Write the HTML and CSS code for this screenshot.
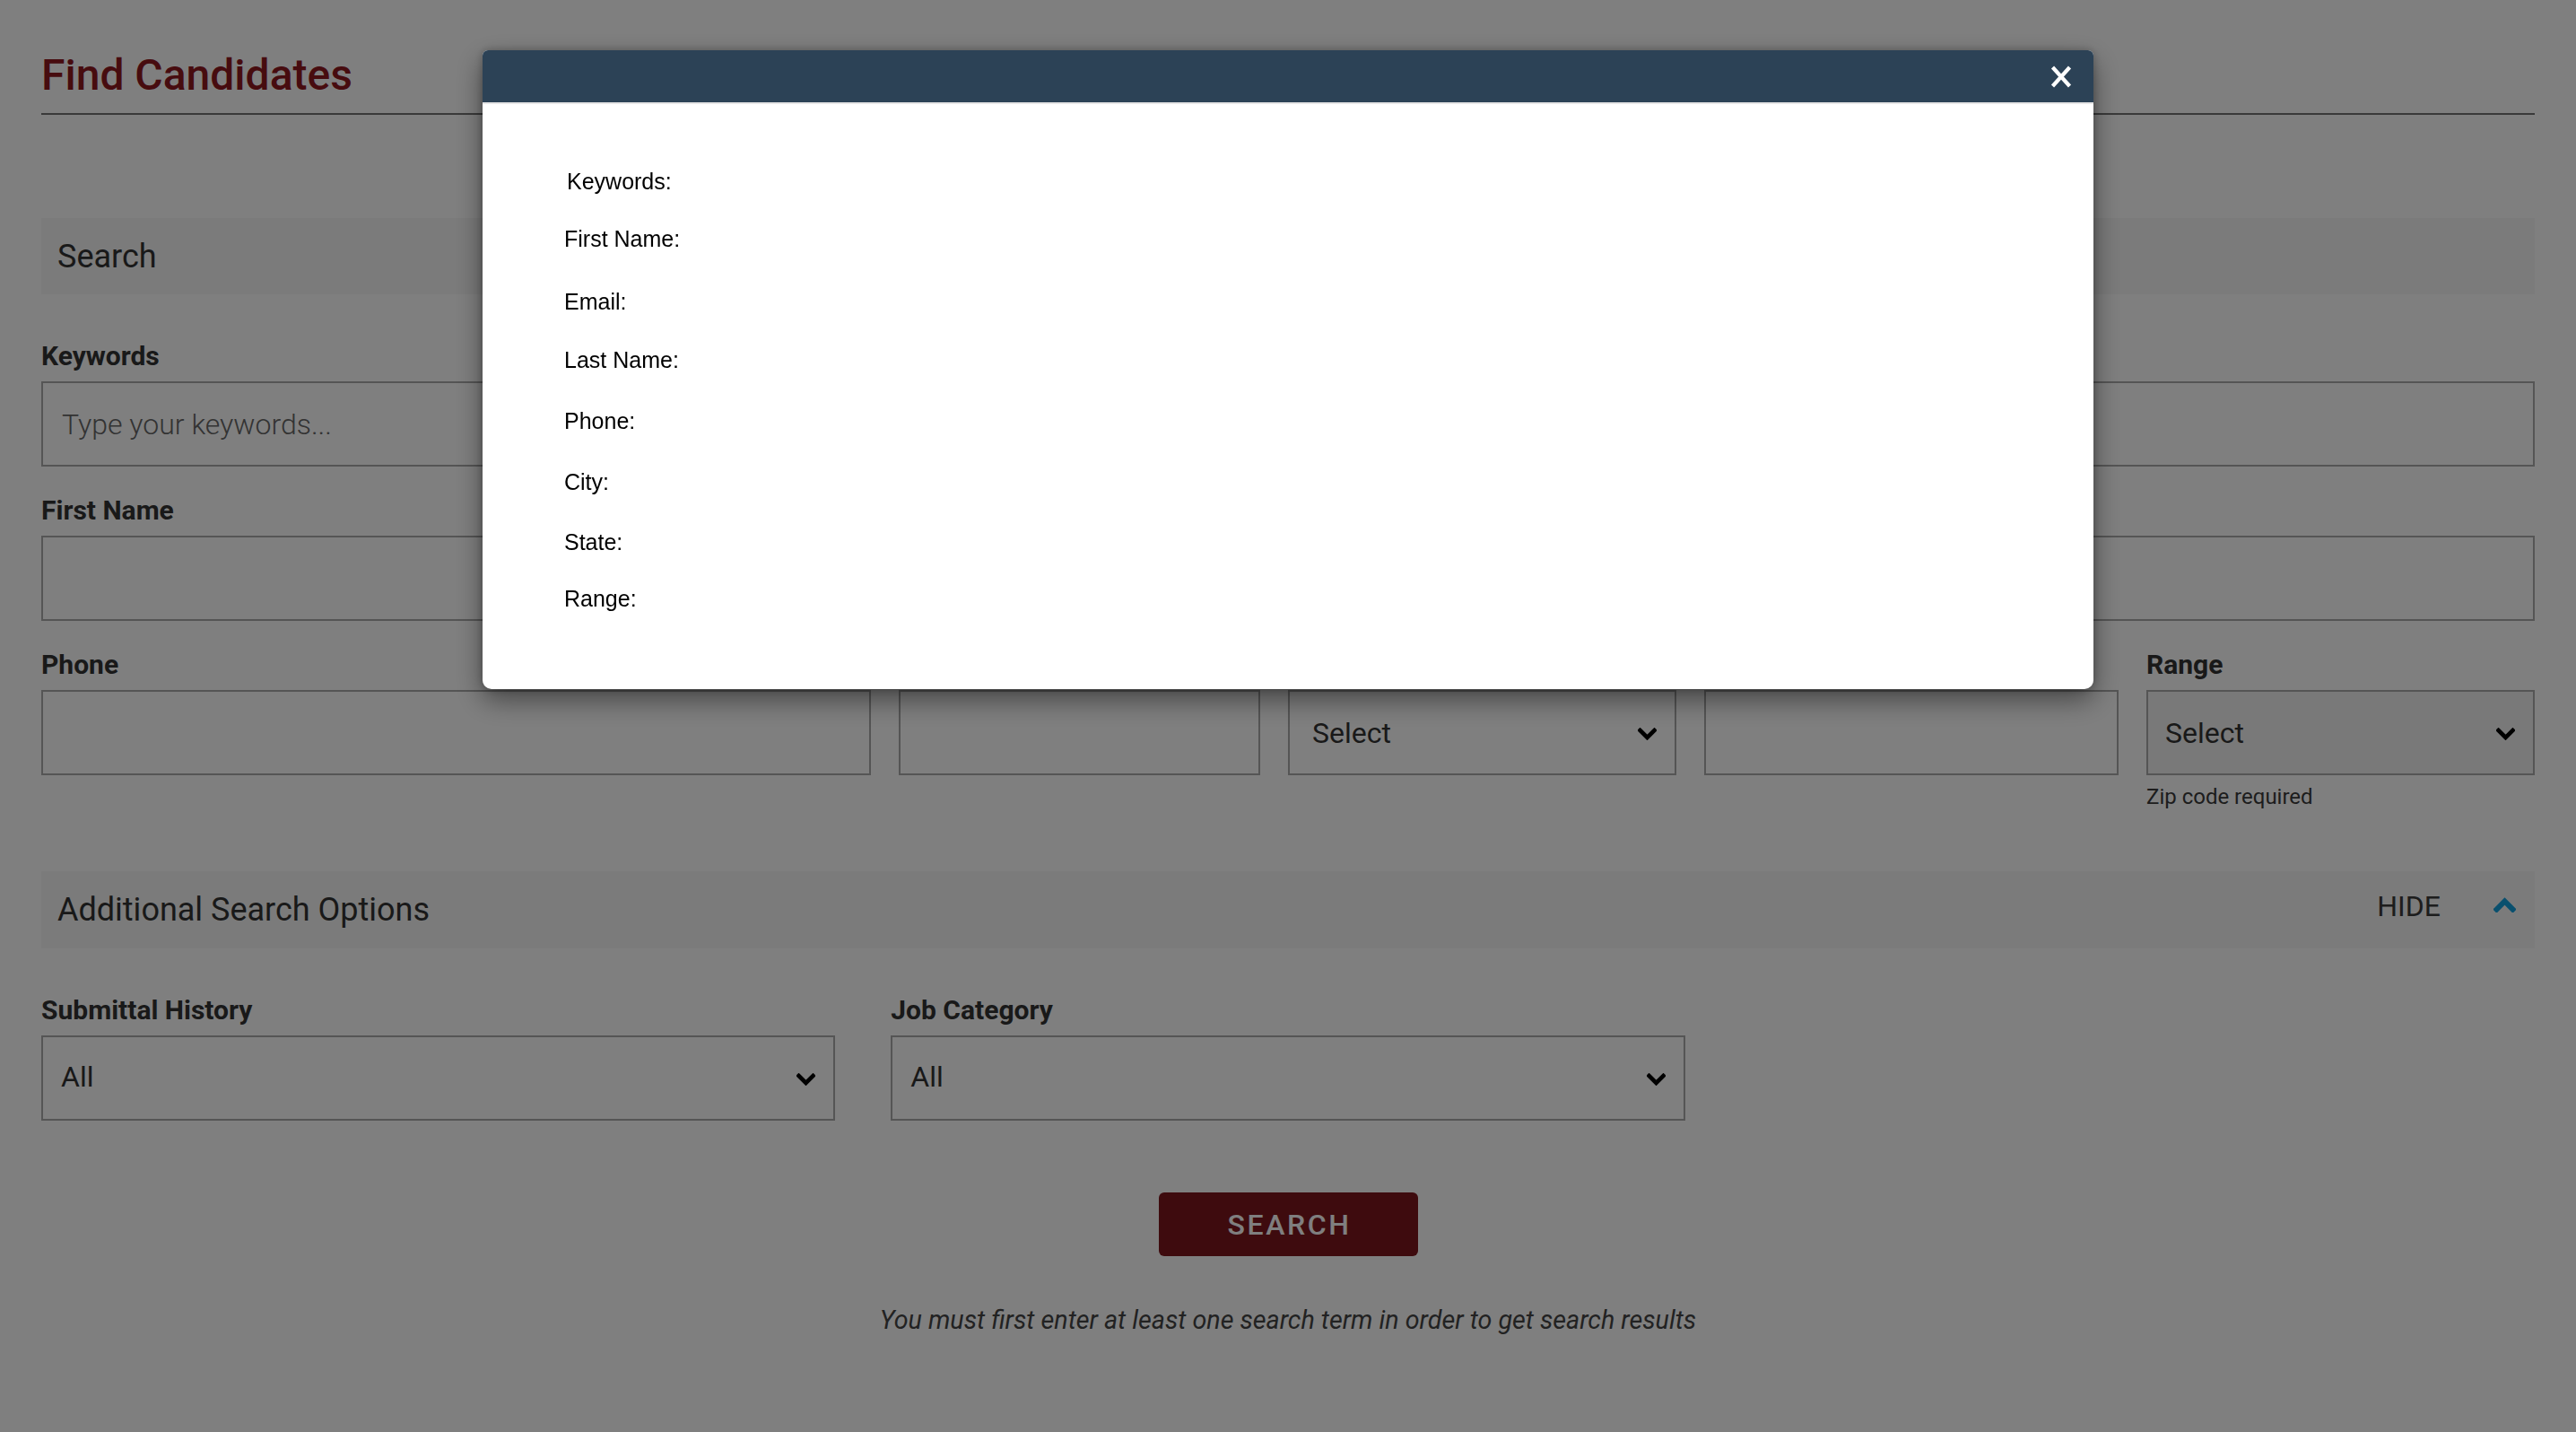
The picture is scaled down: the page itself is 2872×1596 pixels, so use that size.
FILE: index.html
```html
<!DOCTYPE html>
<html lang="en">
<head>
<meta charset="utf-8">
<title>Find Candidates</title>
<link rel="stylesheet" href="styles.css">
</head>
<body>
<main class="page">
  <h1 class="page-title">Find Candidates</h1>

  <section class="band">
    <h2 class="band-title">Search</h2>
  </section>

  <div class="field field-keywords">
    <label class="field-label" for="kw">Keywords</label>
    <input class="text-input" id="kw" type="text" placeholder="Type your keywords...">
  </div>

  <div class="row row-names">
    <div class="field">
      <label class="field-label" for="fn">First Name</label>
      <input class="text-input" id="fn" type="text">
    </div>
    <div class="field">
      <label class="field-label" for="ln">Last Name</label>
      <input class="text-input" id="ln" type="text">
    </div>
    <div class="field">
      <label class="field-label" for="em">Email</label>
      <input class="text-input" id="em" type="text">
    </div>
  </div>

  <div class="row row-location">
    <div class="field">
      <label class="field-label" for="ph">Phone</label>
      <input class="text-input" id="ph" type="text">
    </div>
    <div class="field">
      <label class="field-label" for="ci">City</label>
      <input class="text-input" id="ci" type="text">
    </div>
    <div class="field">
      <span class="field-label">State</span>
      <div class="select select-state">
        <span class="select-value">Select</span>
        <svg class="chev-down" viewBox="0 0 21 14" width="21" height="14"><path d="M2.5 3 L10.5 11 L18.5 3" fill="none" stroke="#000" stroke-width="4.6" stroke-linecap="square" stroke-linejoin="miter"/></svg>
      </div>
    </div>
    <div class="field">
      <label class="field-label" for="zp">Zip Code</label>
      <input class="text-input" id="zp" type="text">
    </div>
    <div class="field">
      <span class="field-label">Range</span>
      <div class="select select-muted">
        <span class="select-value">Select</span>
        <svg class="chev-down" viewBox="0 0 21 14" width="21" height="14"><path d="M2.5 3 L10.5 11 L18.5 3" fill="none" stroke="#000" stroke-width="4.6" stroke-linecap="square" stroke-linejoin="miter"/></svg>
      </div>
      <p class="help-text">Zip code required</p>
    </div>
  </div>

  <section class="band band-toggle">
    <h2 class="band-title">Additional Search Options</h2>
    <div class="toggle">
      <span class="toggle-text">HIDE</span>
      <svg class="chev-up" viewBox="0 0 25 17" width="25" height="17"><path d="M3.5 13.5 L12.5 4.5 L21.5 13.5" fill="none" stroke="#13a0dc" stroke-width="6" stroke-linecap="square" stroke-linejoin="miter"/></svg>
    </div>
  </section>

  <div class="row row-extra">
    <div class="field">
      <span class="field-label">Submittal History</span>
      <div class="select">
        <span class="select-value">All</span>
        <svg class="chev-down" viewBox="0 0 21 14" width="21" height="14"><path d="M2.5 3 L10.5 11 L18.5 3" fill="none" stroke="#000" stroke-width="4.6" stroke-linecap="square" stroke-linejoin="miter"/></svg>
      </div>
    </div>
    <div class="field">
      <span class="field-label">Job Category</span>
      <div class="select">
        <span class="select-value">All</span>
        <svg class="chev-down" viewBox="0 0 21 14" width="21" height="14"><path d="M2.5 3 L10.5 11 L18.5 3" fill="none" stroke="#000" stroke-width="4.6" stroke-linecap="square" stroke-linejoin="miter"/></svg>
      </div>
    </div>
  </div>

  <div class="actions">
    <button class="search-btn" type="button">SEARCH</button>
    <p class="search-note">You must first enter at least one search term in order to get search results</p>
  </div>
</main>

<div class="overlay"></div>

<div class="modal" role="dialog">
  <div class="modal-header">
    <svg class="modal-close" viewBox="0 0 24 27" width="24" height="27"><path d="M2.5 3 L21.5 24 M21.5 3 L2.5 24" fill="none" stroke="#fff" stroke-width="4.2" stroke-linecap="butt"/></svg>
  </div>
  <div class="modal-body">
    <div class="summary">
      <div class="summary-item summary-first">Keywords:</div>
      <div class="summary-item">First Name:</div>
      <div class="summary-item">Email:</div>
      <div class="summary-item">Last Name:</div>
      <div class="summary-item">Phone:</div>
      <div class="summary-item">City:</div>
      <div class="summary-item">State:</div>
      <div class="summary-item">Range:</div>
    </div>
  </div>
</div>
</body>
</html>
```

FILE: styles.css
```css
* { box-sizing: border-box; }

html, body {
  margin: 0;
  padding: 0;
  background: #ffffff;
}

body {
  font-family: Roboto, "Liberation Sans", Arial, sans-serif;
  color: #333333;
}

.page {
  padding: 56px 46px 0;
}

.page-title {
  margin: 0;
  font-size: 48px;
  line-height: 56px;
  font-weight: 500;
  color: #8f181f;
  padding-bottom: 14px;
  border-bottom: 2px solid #757575;
}

.band {
  margin-top: 115px;
  height: 85px;
  background: #f6f6f6;
  display: flex;
  align-items: center;
  justify-content: space-between;
  padding: 0 21px 0 18px;
}

.band-title {
  margin: 0;
  font-size: 36px;
  line-height: 42px;
  font-weight: 400;
  color: #333333;
}

.band-toggle {
  margin-top: 70px;
  height: 86px;
}

.toggle {
  display: flex;
  align-items: center;
  gap: 59px;
}

.toggle-text {
  font-size: 32px;
  line-height: 38px;
  color: #3a3a3a;
  margin-bottom: 8px;
}

.chev-up {
  display: block;
  margin-top: -12px;
}

.field {
  display: flex;
  flex-direction: column;
  min-width: 0;
}

.field-keywords {
  margin-top: 52px;
}

.field-label {
  display: block;
  font-size: 30px;
  line-height: 34px;
  font-weight: 700;
  color: #333333;
  margin-bottom: 11px;
}

.text-input {
  display: block;
  width: 100%;
  height: 95px;
  margin: 0;
  border: 2px solid #aaaaaa;
  border-radius: 0;
  background: #ffffff;
  padding: 0 21px;
  font-family: Roboto, "Liberation Sans", Arial, sans-serif;
  font-size: 32px;
  font-weight: 300;
  color: #333333;
  outline: none;
}

.text-input::placeholder {
  color: #666666;
  opacity: 1;
}

.row {
  display: grid;
  margin-top: 32px;
}

.row-names {
  grid-template-columns: 1fr 1fr 1fr;
  column-gap: 31px;
}

.row-location {
  grid-template-columns: 925px 403px 433px 462px 433px;
  column-gap: 31px;
}

.row-extra {
  margin-top: 52px;
  grid-template-columns: repeat(3, 1fr);
  column-gap: 62px;
}

.select {
  height: 95px;
  border: 2px solid #aaaaaa;
  background: #ffffff;
  display: flex;
  align-items: center;
  justify-content: space-between;
  padding: 0 20px 0 20px;
}

.select-state {
  padding-left: 25px;
}

.select-muted {
  background: #f3f3f3;
  padding-left: 19px;
}

.select-value {
  font-size: 32px;
  line-height: 38px;
  color: #333333;
}

.row-extra .select-value {
  margin-bottom: 4px;
}

.chev-down {
  display: block;
  flex: none;
  margin-top: 2px;
}

.help-text {
  margin: 11px 0 0;
  font-size: 24px;
  line-height: 26px;
  color: #3a3a3a;
}

.actions {
  display: flex;
  flex-direction: column;
  align-items: center;
  margin-top: 80px;
}

.search-btn {
  width: 289px;
  height: 71px;
  border: 0;
  border-radius: 6px;
  background: #7c161c;
  color: #ffffff;
  font-family: Roboto, "Liberation Sans", Arial, sans-serif;
  font-size: 32px;
  font-weight: 500;
  letter-spacing: 2.6px;
  padding: 0 0 0 3px;
  cursor: pointer;
}

.search-note {
  margin: 54px 0 0;
  font-size: 28.7px;
  line-height: 34px;
  font-style: italic;
  color: #444444;
}

.overlay {
  position: fixed;
  inset: 0;
  background: rgba(0, 0, 0, 0.5);
  z-index: 10;
}

.modal {
  position: fixed;
  top: 56px;
  left: calc(50% - 898px);
  width: 1796px;
  height: 712px;
  background: #ffffff;
  border-radius: 6px 6px 10px 10px;
  overflow: hidden;
  box-shadow: 0 12px 30px rgba(0, 0, 0, 0.45), 0 0 10px rgba(0, 0, 0, 0.25);
  z-index: 20;
}

.modal-header {
  height: 60px;
  background: #2c4256;
  border-bottom: 2px solid #e6e6e6;
  display: flex;
  align-items: center;
  justify-content: flex-end;
  padding-right: 24px;
}

.modal-close {
  display: block;
  margin-top: 1px;
}

.modal-body {
  padding: 71px 0 0 91px;
}

.summary {
  display: grid;
  grid-template-rows: 64px 70px 65px 68px 68px 67px 63px 30px;
  font-family: "Liberation Sans", Arial, sans-serif;
  font-size: 25px;
  line-height: 30px;
  color: #000000;
}

.summary-item {
  align-self: start;
}

.summary-first {
  padding-left: 3px;
}
```
